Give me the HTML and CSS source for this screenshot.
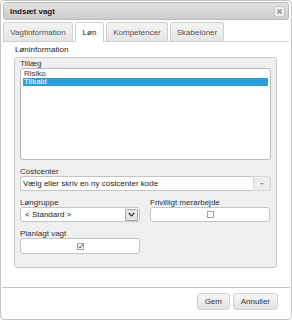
FILE: index.html
```html
<!DOCTYPE html>
<html lang="da">
<head>
    <meta charset="UTF-8">
    <title>Indsæt vagt</title>
    <link rel="stylesheet" href="styles.css">
</head>
<body>
    <div class="dialog">
        <!-- Title bar -->
        <div class="titlebar">
            <span class="title">Indsæt vagt</span>
            <span class="close">
                <svg width="5" height="5" viewBox="0 0 5 5"><path d="M0.5 0.5 L4.5 4.5 M4.5 0.5 L0.5 4.5" stroke="#8a8a8a" stroke-width="1.4"/></svg>
            </span>
        </div>

        <!-- Tabs -->
        <div class="tabs">
            <div class="tab tab-vagt">Vagtinformation</div>
            <div class="tab tab-lon active">Løn</div>
            <div class="tab tab-komp">Kompetencer</div>
            <div class="tab tab-skab">Skabeloner</div>
        </div>

        <div class="panel">
            <div class="legend">Løninformation</div>
            <div class="fieldset">
                <div class="label">Tillæg</div>
                <div class="listbox">
                    <div class="option">Risiko</div>
                    <div class="option selected">Tilkald</div>
                </div>

                <div class="label">Costcenter</div>
                <div class="combo">
                    <div class="combo-text">Vælg eller skriv en ny costcenter kode</div>
                    <div class="combo-btn"><span class="tri"></span></div>
                </div>

                <div class="row">
                    <div class="col">
                        <div class="label">Løngruppe</div>
                        <div class="select">
                            <span>&lt; Standard &gt;</span>
                            <span class="select-btn">
                                <svg width="7" height="5" viewBox="0 0 7 5"><path d="M0.8 1 L3.5 3.8 L6.2 1" fill="none" stroke="#333" stroke-width="1.2"/></svg>
                            </span>
                        </div>
                    </div>
                    <div class="col">
                        <div class="label">Frivilligt merarbejde</div>
                        <div class="checkbox-box"><span class="check"></span></div>
                    </div>
                </div>

                <div class="row">
                    <div class="col">
                        <div class="label">Planlagt vagt</div>
                        <div class="checkbox-box tall">
                            <span class="check">
                                <svg width="7" height="7" viewBox="0 0 7 7"><path d="M1 3.5 L2.8 5.5 L6.5 0.5" fill="none" stroke="#222" stroke-width="1.2"/></svg>
                            </span>
                        </div>
                    </div>
                </div>
            </div>
        </div>

        <div class="footer">
            <button class="btn btn-gem">Gem</button>
            <button class="btn">Annuller</button>
        </div>
    </div>
</body>
</html>
```

FILE: styles.css
```css
body {
    margin: 0;
    font-family: "Liberation Sans", Arial, sans-serif;
    font-size: 8px;
    color: #333;
    background: #fff;
}

.dialog {
    width: 292px;
    height: 320px;
    box-sizing: border-box;
    border: 1px solid #c4c4c4;
    border-radius: 4px;
    padding: 1px 2px 0 2px;
    background: #fff;
    position: relative;
}

.titlebar {
    height: 16px;
    border: 1px solid #bbb;
    border-radius: 3px;
    background: linear-gradient(#e2e2e2, #cdcdcd);
    display: flex;
    align-items: center;
    justify-content: space-between;
    padding: 0 3px 0 6px;
}

.title {
    font-weight: bold;
    color: #222;
}

.close {
    width: 9px;
    height: 9px;
    border: 1px solid #c8c8c8;
    border-radius: 2px;
    background: #efefef;
    display: flex;
    align-items: center;
    justify-content: center;
}

.tabs {
    display: flex;
    margin-top: 2px;
    border-bottom: 1px solid #cfcfcf;
    height: 19px;
}

.tab {
    box-sizing: border-box;
    height: 19px;
    border: 1px solid #cfcfcf;
    border-bottom: none;
    border-radius: 3px 3px 0 0;
    background: linear-gradient(#f3f3f3, #e5e5e5);
    color: #555;
    margin-right: 2px;
    display: flex;
    align-items: center;
    justify-content: center;
}

.tab-vagt { width: 70px; }
.tab-lon { width: 29px; }
.tab-komp { width: 62px; }
.tab-skab { width: 54px; }

.tab.active {
    background: #fff;
    color: #222;
    height: 20px;
}

.panel {
    padding: 3px 12px 0 11px;
}

.legend {
    color: #222;
    line-height: 10px;
    margin-bottom: 2px;
    padding-left: 1px;
}

.fieldset {
    background: #efefef;
    border: 1px solid #c9c9c9;
    border-radius: 3px;
    height: 211px;
    box-sizing: border-box;
    padding: 1px 5px 0 5px;
}

.label {
    color: #333;
    line-height: 9px;
    white-space: nowrap;
}

.listbox {
    background: #fff;
    border: 1px solid #b8b8b8;
    border-radius: 3px;
    height: 92px;
    box-sizing: border-box;
    padding: 1px 2px;
    margin-bottom: 7px;
}

.option {
    line-height: 8px;
    padding-left: 1px;
    color: #333;
}

.option.selected {
    background: #2a9fdc;
    color: #fff;
}

.combo {
    display: flex;
    height: 15px;
    margin-bottom: 7px;
}

.combo-text {
    flex: 1;
    background: #fff;
    border: 1px solid #c4c4c4;
    border-right: none;
    border-radius: 3px 0 0 3px;
    padding-left: 2px;
    display: flex;
    align-items: center;
    color: #222;
}

.combo-btn {
    width: 16px;
    border: 1px solid #d6d6d6;
    border-radius: 0 3px 3px 0;
    background: #ececec;
    display: flex;
    align-items: center;
    justify-content: center;
}

.tri {
    width: 0;
    height: 0;
    border-left: 2px solid transparent;
    border-right: 2px solid transparent;
    border-top: 2px solid #999;
}

.row {
    display: flex;
    gap: 10px;
    margin-bottom: 7px;
}

.col {
    width: 120px;
}

.select {
    height: 15px;
    box-sizing: border-box;
    background: #fff;
    border: 1px solid #c4c4c4;
    border-radius: 3px;
    display: flex;
    align-items: center;
    justify-content: space-between;
    padding: 0 1px 0 4px;
    color: #222;
}

.select-btn {
    width: 13px;
    height: 12px;
    box-sizing: border-box;
    border: 1px solid #a8a8a8;
    border-radius: 1px;
    background: #e4e4e4;
    display: flex;
    align-items: center;
    justify-content: center;
}

.checkbox-box {
    height: 15px;
    box-sizing: border-box;
    background: #fff;
    border: 1px solid #c4c4c4;
    border-radius: 3px;
    display: flex;
    align-items: center;
    justify-content: center;
}

.checkbox-box.tall {
    height: 16px;
}

.check {
    width: 7px;
    height: 7px;
    box-sizing: border-box;
    border: 1px solid #a0a0a0;
    background: #fff;
    display: flex;
    align-items: center;
    justify-content: center;
    overflow: visible;
}

.footer {
    position: absolute;
    left: 1px;
    right: 1px;
    bottom: 0;
    height: 32px;
    box-sizing: border-box;
    border-top: 1px solid #c4c4c4;
    display: flex;
    justify-content: flex-end;
    align-items: flex-start;
    gap: 3px;
    padding: 5px 12px 0 0;
}

.btn {
    font-family: "Liberation Sans", Arial, sans-serif;
    font-size: 8px;
    color: #333;
    height: 17px;
    padding: 0 7px;
    border: 1px solid #d0d0d0;
    border-radius: 3px;
    background: linear-gradient(#f6f6f6, #e2e2e2);
}

.btn-gem {
    width: 33px;
}
```
